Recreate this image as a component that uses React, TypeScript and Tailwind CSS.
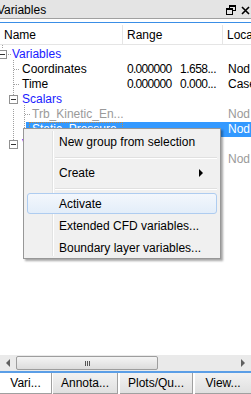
const font = { fontFamily: '"Liberation Sans", Arial, sans-serif' };

function Toggle({ x }: { x: number }) {
  return (
    <div
      className="absolute top-[3px] flex h-[9px] w-[9px] items-center justify-center border border-[#919191] bg-white"
      style={{ left: x }}
    >
      <div className="h-px w-[5px] bg-[#333]" />
    </div>
  );
}

type Row = {
  label: string;
  indent: number;
  color: string;
  toggle?: number;
  r1?: string;
  r2?: string;
  loc?: string;
  locColor?: string;
  selected?: boolean;
};

const rows: Row[] = [
  { label: "Variables", indent: 12, color: "text-[#1a1aff]", toggle: -2 },
  { label: "Coordinates", indent: 22, color: "text-black", r1: "0.000000", r2: "1.658...", loc: "Nod" },
  { label: "Time", indent: 22, color: "text-black", r1: "0.000000", r2: "0.000...", loc: "Case" },
  { label: "Scalars", indent: 22, color: "text-[#1a1aff]", toggle: 9 },
  { label: "Trb_Kinetic_En...", indent: 32, color: "text-[#9a9a9a]", loc: "Nod", locColor: "text-[#9a9a9a]" },
  { label: "Static_Pressure", indent: 32, color: "text-white", loc: "Nod", locColor: "text-white", selected: true },
  { label: "Vectors", indent: 22, color: "text-[#1a1aff]", toggle: 9 },
  { label: "Velocity", indent: 32, color: "text-[#9a9a9a]", loc: "Nod", locColor: "text-[#9a9a9a]" },
];

// dotted connector lines of the tree
function TreeLines() {
  return (
    <svg className="absolute left-0 top-0" width="60" height="170" shapeRendering="crispEdges">
      <g stroke="#a0a0a0" strokeDasharray="1 1" strokeWidth="1">
        <line x1="2.5" y1="3" x2="2.5" y2="0" />
        <line x1="6" y1="9.5" x2="11" y2="9.5" />
        <line x1="13.5" y1="15" x2="13.5" y2="54" />
        <line x1="13.5" y1="24.5" x2="20" y2="24.5" />
        <line x1="13.5" y1="39.5" x2="20" y2="39.5" />
        <line x1="13.5" y1="64" x2="13.5" y2="99" />
        <line x1="24.5" y1="60" x2="24.5" y2="101" />
        <line x1="24.5" y1="69.5" x2="30" y2="69.5" />
        <line x1="24.5" y1="84.5" x2="30" y2="84.5" />
        <line x1="24.5" y1="114" x2="24.5" y2="131" />
        <line x1="24.5" y1="114.5" x2="30" y2="114.5" />
      </g>
    </svg>
  );
}

function Separator() {
  return (
    <div className="flex h-[9px] flex-col justify-center">
      <div className="ml-[28px] h-px bg-[#e0e0e0]" />
      <div className="ml-[28px] h-px bg-white" />
    </div>
  );
}

function Menu() {
  return (
    <div
      className="absolute left-[23px] top-[128px] h-[131px] w-[198px] border border-[#979797] bg-[#f0f0f0] text-[12px] text-black shadow-[2px_2px_2px_rgba(0,0,0,0.35)]"
      style={font}
    >
      <div className="absolute bottom-[2px] left-[28px] top-[2px] w-px bg-[#e2e3e3]" />
      <div className="absolute bottom-[2px] left-[29px] top-[2px] w-px bg-white" />
      <div className="relative flex flex-col px-[3px] pt-[2px]">
        <div className="flex h-[22px] items-center pl-[32px]">New group from selection</div>
        <Separator />
        <div className="flex h-[22px] items-center justify-between pl-[32px] pr-[14px]">
          <span>Create</span>
          <span className="h-0 w-0 border-y-[4px] border-l-[4px] border-y-transparent border-l-black" />
        </div>
        <Separator />
        <div className="flex h-[21px] items-center rounded-[3px] border border-[#aeccf0] bg-gradient-to-b from-[#f3f7fc] to-[#e3edf9] pl-[31px]">
          Activate
        </div>
        <div className="flex h-[23px] items-center pl-[32px]">Extended CFD variables...</div>
        <div className="flex h-[21px] items-center pl-[32px]">Boundary layer variables...</div>
      </div>
    </div>
  );
}

export default function App() {
  return (
    <div className="relative flex h-[394px] w-[251px] flex-col overflow-hidden bg-white text-[12px]" style={font}>
      <div className="flex h-[19px] items-center justify-between border-b border-[#a0a0a0] bg-[#e4e4e4] pr-[1px] pt-[2px]">
        <span className="-ml-[3px] text-black">Variables</span>
        <div className="flex items-center gap-[5px]">
          <svg width="10" height="10" viewBox="0 0 10 10" shapeRendering="crispEdges">
            <rect x="3.5" y="0.5" width="6" height="5" fill="none" stroke="#000" />
            <rect x="3" y="0" width="7" height="2" fill="#000" />
            <rect x="0.5" y="3.5" width="6" height="6" fill="#e4e4e4" stroke="#000" />
            <rect x="0" y="3" width="7" height="2" fill="#000" />
          </svg>
          <svg width="9" height="9" viewBox="0 0 9 9">
            <path d="M1 1 L8 8 M8 1 L1 8" stroke="#000" strokeWidth="1.6" />
          </svg>
        </div>
      </div>
      <div className="h-[3px] shrink-0 bg-white" />
      <div className="h-[1px] shrink-0 bg-[#3a8ee6]" />
      <div className="flex h-[22px] shrink-0 items-center border-b border-[#e5e5e5] bg-white pt-[2px]">
        <div className="w-[123px] shrink-0 border-r border-[#e5e5e5] pl-[4px] leading-[20px]">Name</div>
        <div className="w-[100px] shrink-0 border-r border-[#e5e5e5] pl-[4px] leading-[20px]">Range</div>
        <div className="pl-[4px] leading-[20px]">Loca</div>
      </div>
      <div className="relative flex-1 pt-[2px]">
        <TreeLines />
        {rows.map((r) => (
          <div key={r.label} className="relative flex h-[15px] items-center leading-[15px]">
            {r.selected && <div className="absolute bottom-0 left-[26px] right-0 top-0 bg-[#3399ff]" />}
            {r.selected && (
              <div className="absolute bottom-0 left-[29px] top-0 w-[94px] border border-dotted border-[#c98a3a]" />
            )}
            {r.toggle !== undefined && <Toggle x={r.toggle} />}
            <div className={`relative w-[127px] shrink-0 whitespace-nowrap ${r.color}`} style={{ paddingLeft: r.indent }}>
              {r.label}
            </div>
            <div className="relative w-[53px] shrink-0 whitespace-nowrap tracking-[-0.7px]">{r.r1}</div>
            <div className="relative w-[48px] shrink-0 whitespace-nowrap tracking-[-0.5px]">{r.r2}</div>
            <div className={`relative whitespace-nowrap ${r.locColor ?? "text-black"}`}>{r.loc}</div>
          </div>
        ))}
      </div>
      <div className="flex h-[16px] shrink-0 items-center bg-[#eaeaea]">
        <div className="flex w-[16px] justify-center">
          <span className="h-0 w-0 border-y-[4px] border-r-[4px] border-y-transparent border-r-[#606060]" />
        </div>
        <div className="flex h-[14px] w-[142px] items-center justify-center rounded-[2px] border border-[#9d9d9d] bg-gradient-to-b from-[#f4f4f4] to-[#dcdcdc]">
          <div className="flex gap-[1px]">
            <div className="h-[5px] w-px bg-[#555]" />
            <div className="h-[5px] w-px bg-[#555]" />
            <div className="h-[5px] w-px bg-[#555]" />
          </div>
        </div>
        <div className="flex-1" />
        <div className="flex w-[16px] justify-center">
          <span className="h-0 w-0 border-y-[4px] border-l-[4px] border-y-transparent border-l-[#606060]" />
        </div>
      </div>
      <div className="h-[2px] shrink-0 bg-[#5b9ee6]" />
      <div className="flex h-[21px] shrink-0 bg-white">
        <div className="flex w-[52px] items-center justify-center border-b border-r border-[#a0a0a0] bg-white">Vari...</div>
        <div className="ml-[1px] flex w-[65px] items-center justify-center border-b border-r border-[#a0a0a0] bg-gradient-to-b from-[#f2f2f2] to-[#e0e0e0]">Annota...</div>
        <div className="ml-[2px] flex w-[73px] items-center justify-center border-b border-r border-[#a0a0a0] bg-gradient-to-b from-[#f2f2f2] to-[#e0e0e0]">Plots/Qu...</div>
        <div className="ml-[2px] flex flex-1 items-center justify-center border-b border-[#a0a0a0] bg-gradient-to-b from-[#f2f2f2] to-[#e0e0e0]">View...</div>
      </div>
      <Menu />
    </div>
  );
}
